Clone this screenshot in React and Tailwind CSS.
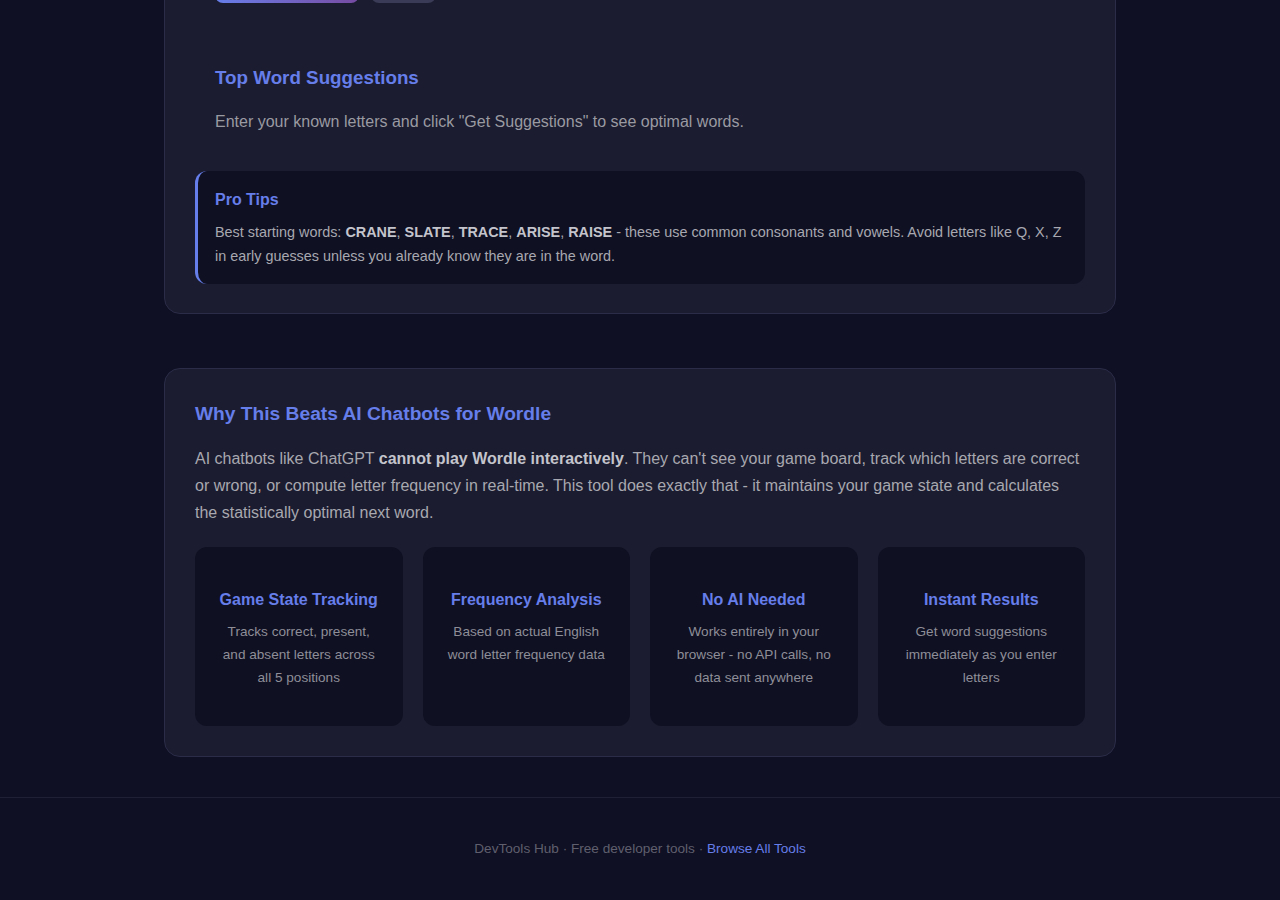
const FEATURES = [
  { title: 'Game State Tracking', text: 'Tracks correct, present, and absent letters across all 5 positions' },
  { title: 'Frequency Analysis', text: 'Based on actual English word letter frequency data' },
  { title: 'No AI Needed', text: 'Works entirely in your browser - no API calls, no data sent anywhere' },
  { title: 'Instant Results', text: 'Get word suggestions immediately as you enter letters' },
]

const STARTERS = ['CRANE', 'SLATE', 'TRACE', 'ARISE', 'RAISE']

export default function App() {
  return (
    <div className="min-h-[900px] bg-[#0f1023] font-['Liberation_Sans',Arial,sans-serif] overflow-hidden">
      <main className="w-[952px] mx-auto -mt-[72px]">
        {/* Solver card (scrolled past the inputs) */}
        <section className="bg-[#1b1c2f] border border-[#2b2c48] rounded-2xl px-[30px] pt-[30px] pb-[29px]">
          <div className="flex gap-3 px-5">
            <button className="w-[144px] h-[44px] rounded-lg bg-gradient-to-r from-[#667eea] to-[#764ba2] text-white font-bold text-sm">
              Get Suggestions
            </button>
            <button className="w-[65px] h-[44px] rounded-lg bg-[#3a3b56] text-[#ccc] text-sm">
              Reset
            </button>
          </div>

          <div className="p-5 mt-[43px]">
            <h3 className="text-[18.8px] font-bold text-[#667eea] leading-tight">Top Word Suggestions</h3>
            <p className="mt-[21px] text-base text-[#9a9aa2] leading-normal">
              Enter your known letters and click "Get Suggestions" to see optimal words.
            </p>
          </div>

          <div className="mt-[17px] bg-[#0f1022] border-l-[3px] border-[#667eea] rounded-xl pl-[17px] pr-5 pt-[19px] pb-[16px]">
            <h4 className="text-base font-bold text-[#667eea] leading-tight">Pro Tips</h4>
            <p className="mt-[11px] text-[14.4px] leading-[1.6] text-[#a8a8b0]">
              Best starting words:{' '}
              {STARTERS.map((w, i) => (
                <span key={w}>
                  <strong className="text-[#c4c4cc]">{w}</strong>
                  {i < STARTERS.length - 1 ? ', ' : ''}
                </span>
              ))}
              {' '}- these use common consonants and vowels. Avoid letters like Q, X, Z in early guesses unless you already know they are in the word.
            </p>
          </div>
        </section>

        {/* Why section */}
        <section className="mt-[54px] mb-10 bg-[#1b1c2f] border border-[#2b2c48] rounded-2xl p-[30px]">
          <h2 className="text-[19.2px] font-bold text-[#667eea] leading-tight mt-[3px]">
            Why This Beats AI Chatbots for Wordle
          </h2>
          <p className="mt-[19px] text-base leading-[1.7] text-[#a8a8b0]">
            AI chatbots like ChatGPT <strong className="text-[#c4c4cc]">cannot play Wordle interactively</strong>. They can't see your game board, track which letters are correct or wrong, or compute letter frequency in real-time. This tool does exactly that - it maintains your game state and calculates the statistically optimal next word.
          </p>
          <div className="mt-[21px] grid grid-cols-4 gap-5">
            {FEATURES.map(f => (
              <div key={f.title} className="bg-[#0f1022] rounded-xl px-5 pt-[43px] pb-[37px] text-center">
                <h4 className="text-base font-bold text-[#667eea] leading-tight">{f.title}</h4>
                <p className="mt-[10px] text-[13.6px] leading-[1.7] text-[#8e8e98]">{f.text}</p>
              </div>
            ))}
          </div>
        </section>
      </main>

      <footer className="border-t border-[#1f2036] pt-[41px] pb-10 text-center text-[13.6px] text-[#5f5f6e]">
        DevTools Hub · Free developer tools · <a className="text-[#667eea]">Browse All Tools</a>
      </footer>
    </div>
  )
}
